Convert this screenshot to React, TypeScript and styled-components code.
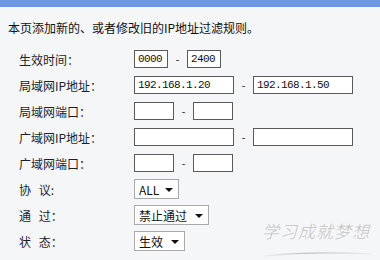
import React from 'react';
import styled, {createGlobalStyle} from 'styled-components';

const GlobalStyle = createGlobalStyle`
  html, body {
    margin: 0;
    padding: 0;
    background: #f5f6f7;
  }
  body {
    font-family: "Noto Sans CJK SC", "Liberation Sans", sans-serif;
    font-size: 12px;
    color: #1c1c1c;
  }
`

const Page = styled.div`
  position: relative;
  width: 380px;
  height: 260px;
  overflow: hidden;
`

const TopBar = styled.div`
  height: 7px;
  background: #6f96e4;
`

const Intro = styled.div`
  padding: 14px 0 0 8px;
  height: 25px;
  line-height: 14px;
  font-size: 12px;
  color: #111;
`

const Form = styled.div`
  display: grid;
  grid-template-columns: 115px auto;
  grid-auto-rows: 26px;
  padding-left: 19px;
`

const Label = styled.div`
  display: flex;
  align-items: center;
  font-size: 12px;
  color: #1a1f2a;
  white-space: pre;
  word-spacing: 5px;
`

const Field = styled.div`
  display: flex;
  align-items: center;
`

const TextBox = styled.div<{w: number}>`
  box-sizing: border-box;
  width: ${p => p.w}px;
  height: 18px;
  border: 1px solid #5a5a5a;
  background: #fff;
  padding-left: 3px;
  font-family: "Liberation Mono", monospace;
  font-size: 11px;
  letter-spacing: -0.6px;
  line-height: 16px;
  color: #111;
`

const Dash = styled.span`
  width: 19px;
  text-align: center;
  font-family: "Liberation Sans", sans-serif;
  font-size: 11px;
  color: #333;
`

const Select = styled.div<{w: number}>`
  box-sizing: border-box;
  width: ${p => p.w}px;
  height: 20px;
  border: 1px solid #a9a9a9;
  background: #fff;
  display: flex;
  align-items: center;
  justify-content: space-between;
  padding: 0 5px 0 4px;
  font-size: 12px;
  color: #111;
`

const Arrow = styled.span`
  width: 0;
  height: 0;
  border-left: 4px solid transparent;
  border-right: 4px solid transparent;
  border-top: 4px solid #111;
  margin-top: 1px;
`

const Watermark = styled.div`
  position: absolute;
  left: 262px;
  top: 218px;
  width: 110px;
`

const WatermarkText = styled.div`
  font-family: "Noto Sans CJK SC", sans-serif;
  font-weight: 300;
  font-style: italic;
  font-size: 17px;
  letter-spacing: 1px;
  color: #c2c2c2;
  line-height: 26px;
`

type Range = {w: number; a?: string; b?: string}

const rows: {label: string; range?: Range; select?: {w: number; text: string}}[] = [
  {label: '生效时间：', range: {w: 34, a: '0000', b: '2400'}},
  {label: '局域网IP地址：', range: {w: 100, a: '192.168.1.20', b: '192.168.1.50'}},
  {label: '局域网端口：', range: {w: 40}},
  {label: '广域网IP地址：', range: {w: 100}},
  {label: '广域网端口：', range: {w: 40}},
  {label: '协 议:', select: {w: 45, text: 'ALL'}},
  {label: '通 过：', select: {w: 75, text: '禁止通过'}},
  {label: '状 态：', select: {w: 51, text: '生效'}},
]

export default function App() {
  return (
    <Page>
      <GlobalStyle/>
      <TopBar/>
      <Intro>本页添加新的、或者修改旧的IP地址过滤规则。</Intro>
      <Form>
        {rows.map(r => (
          <React.Fragment key={r.label}>
            <Label>{r.label}</Label>
            <Field>
              {r.range && (
                <>
                  <TextBox w={r.range.w}>{r.range.a}</TextBox>
                  <Dash>-</Dash>
                  <TextBox w={r.range.w}>{r.range.b}</TextBox>
                </>
              )}
              {r.select && (
                <Select w={r.select.w}>
                  <span>{r.select.text}</span>
                  <Arrow/>
                </Select>
              )}
            </Field>
          </React.Fragment>
        ))}
      </Form>
      <Watermark>
        <WatermarkText>学习成就梦想</WatermarkText>
        <svg width="112" height="8" viewBox="0 0 112 8">
          <defs>
            <linearGradient id="wm" x1="0" x2="1">
              <stop offset="0" stopColor="#c8c8c8" stopOpacity="0.2"/>
              <stop offset="0.4" stopColor="#bdbdbd"/>
              <stop offset="1" stopColor="#d0d0d0" stopOpacity="0.3"/>
            </linearGradient>
          </defs>
          <path d="M2 6 Q50 1 110 4" stroke="url(#wm)" strokeWidth="1.2" fill="none"/>
        </svg>
      </Watermark>
    </Page>
  );
}
